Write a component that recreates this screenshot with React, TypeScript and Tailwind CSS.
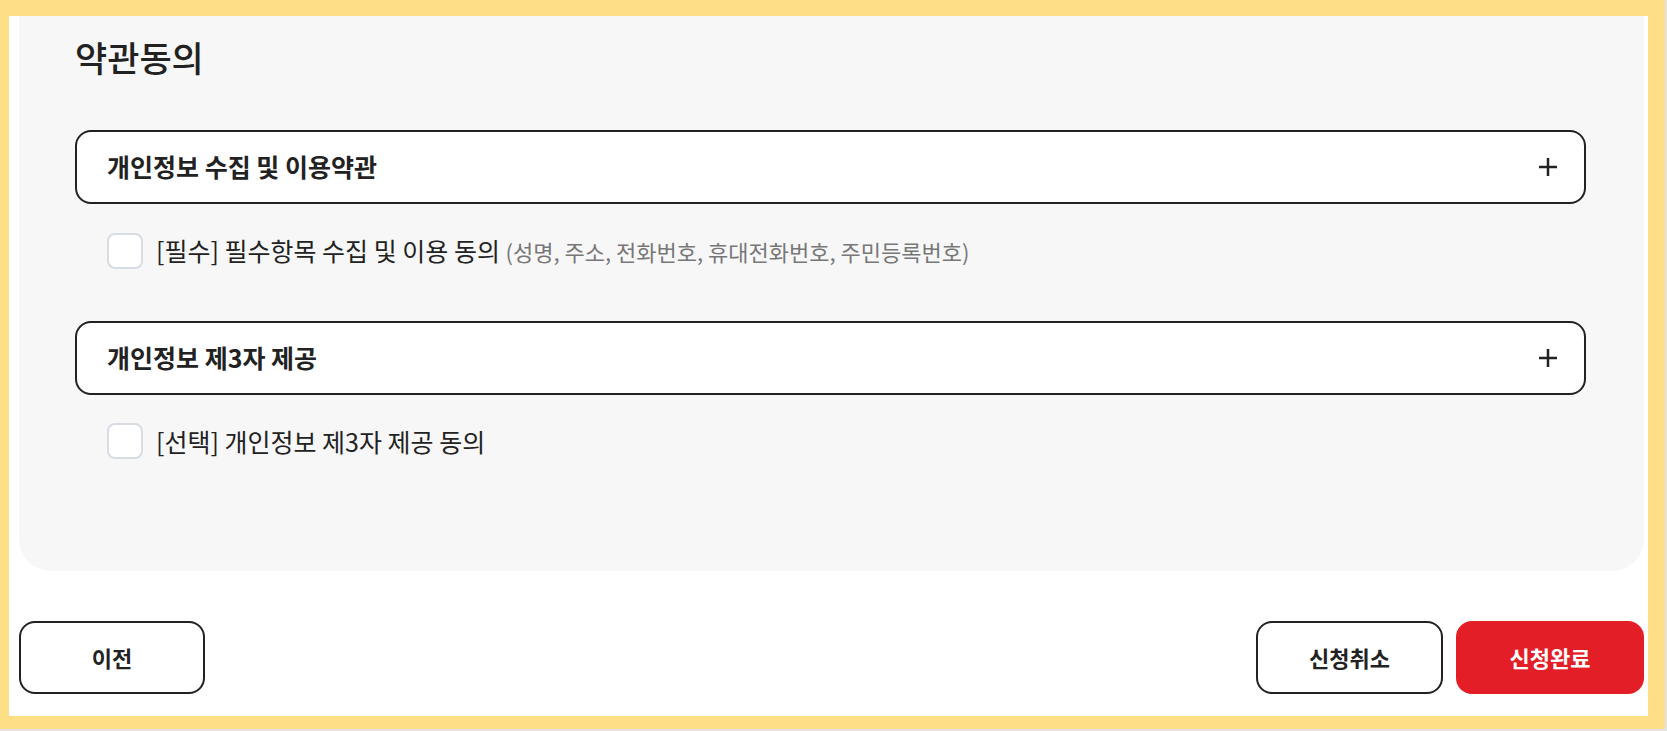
import { useState } from "react";

const font = { fontFamily: '"Noto Sans CJK KR", "Noto Sans", sans-serif' };

const PlusIcon = () => (
  <svg width="20" height="20" viewBox="0 0 20 20" fill="none">
    <path d="M10 1v18M1 10h18" stroke="#222" strokeWidth="2.5" />
  </svg>
);

const Accordion = ({ title }: { title: string }) => (
  <button className="w-full h-[74px] flex items-center justify-between bg-white border-2 border-[#222] rounded-2xl pl-[30px] pr-[26px]">
    <span className="text-[25px] font-bold text-[#222]">{title}</span>
    <PlusIcon />
  </button>
);

const CheckRow = ({
  checked,
  onToggle,
  children,
}: {
  checked: boolean;
  onToggle: () => void;
  children: React.ReactNode;
}) => (
  <label className="flex items-center gap-[13px] ml-8 cursor-pointer">
    <span
      onClick={onToggle}
      className={
        checked
          ? "w-9 h-9 rounded-lg border-2 border-[#e41e26] bg-[#e41e26]"
          : "w-9 h-9 rounded-lg border-2 border-[#d8dce3] bg-white"
      }
    />
    <span className="text-[25px] text-[#222] leading-9">{children}</span>
  </label>
);

const App = () => {
  const [required, setRequired] = useState(false);
  const [optional, setOptional] = useState(false);

  return (
    <div
      style={font}
      className="h-screen bg-[#ffdf85] pt-4 pl-[9px] pr-[17px] pb-[13px] border-r-2 border-b-2 border-[#e3e3e3]"
    >
      <div className="h-full bg-white pl-[10px] pr-[4px] flex flex-col">
        {/* 약관 패널 */}
        <div className="bg-[#f7f7f7] rounded-b-[32px] pl-14 pr-[58px] pt-[17px] pb-[112px]">
          <h2 className="text-[35px] leading-[48px] font-medium text-[#222]">약관동의</h2>

          <div className="mt-[49px]">
            <Accordion title="개인정보 수집 및 이용약관" />
          </div>
          <div className="mt-7">
            <CheckRow checked={required} onToggle={() => setRequired(!required)}>
              [필수] 필수항목 수집 및 이용 동의{" "}
              <span className="text-[22px] text-[#777]">(성명, 주소, 전화번호, 휴대전화번호, 주민등록번호)</span>
            </CheckRow>
          </div>

          <div className="mt-[52px]">
            <Accordion title="개인정보 제3자 제공" />
          </div>
          <div className="mt-7">
            <CheckRow checked={optional} onToggle={() => setOptional(!optional)}>
              [선택] 개인정보 제3자 제공 동의
            </CheckRow>
          </div>
        </div>

        {/* 하단 버튼 */}
        <div className="mt-[50px] flex items-center justify-between">
          <button className="w-[186px] h-[73px] rounded-2xl border-2 border-[#222] bg-white text-[22px] font-bold text-[#222]">
            이전
          </button>
          <div className="flex gap-[13px]">
            <button className="w-[187px] h-[73px] rounded-2xl border-2 border-[#222] bg-white text-[22px] font-bold text-[#222]">
              신청취소
            </button>
            <button className="w-[188px] h-[73px] rounded-2xl bg-[#e41e26] text-[22px] font-bold text-white">
              신청완료
            </button>
          </div>
        </div>
      </div>
    </div>
  );
};

export default App;
